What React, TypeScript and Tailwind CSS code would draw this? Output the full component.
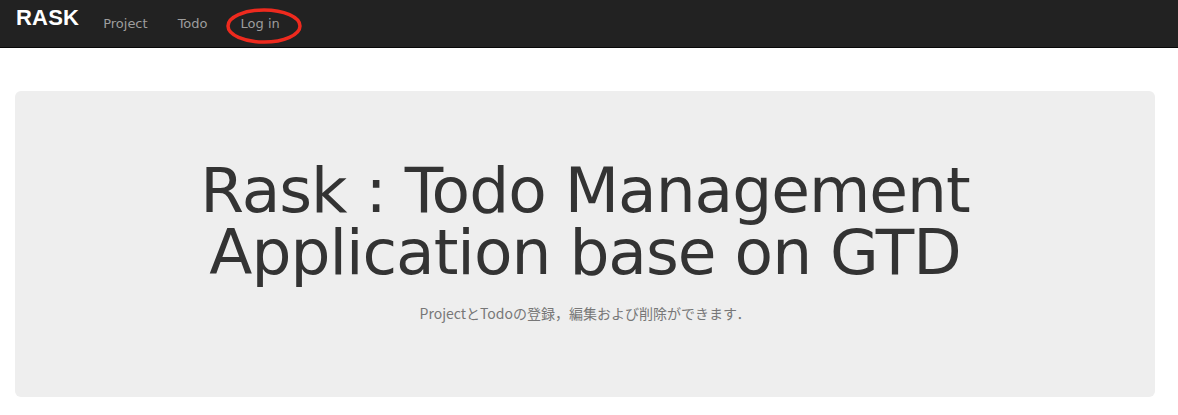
export default function App() {
  return (
    <div className="min-h-[415px] bg-white" style={{ fontFamily: '"DejaVu Sans", Verdana, sans-serif' }}>
      {/* navbar */}
      <nav className="h-12 bg-[#222] border-b border-[#080808] flex items-start px-[15px]">
        <a className="pt-[6px] pr-[9px] pl-px text-[22px] font-bold text-white tracking-[0.2px] leading-[24px]" style={{ fontFamily: '"Liberation Sans", Arial, sans-serif' }}>
          RASK
        </a>
        <ul className="flex pt-[15px] text-[13px] text-[#9d9d9d] leading-[18px]">
          <li className="px-[15px]">Project</li>
          <li className="pl-[15px] pr-[18px]">Todo</li>
          <li className="relative px-[15px]">
            Log in
            <svg className="absolute left-[-1px] top-[-8px] w-[78px] h-[38px] pointer-events-none" viewBox="0 0 78 38">
              <ellipse cx="39" cy="19" rx="36" ry="16" fill="none" stroke="#ee2a1e" strokeWidth="3.5" />
            </svg>
          </li>
        </ul>
      </nav>

      <div className="pl-[15px] pr-[23px] pt-[43px]">
        <div className="h-[306px] bg-[#eee] rounded-md flex flex-col items-center pt-[69px]">
          <h1 className="text-center text-[63px] leading-[62px] text-[#333] tracking-[-1px]" style={{ fontFamily: '"DejaVu Sans", Tahoma, sans-serif' }}>
            Rask : Todo Management
            <br />
            Application base on GTD
          </h1>
          <p className="mt-[19px] text-[14px] text-[#777]" style={{ fontFamily: '"Noto Sans CJK JP", sans-serif' }}>
            ProjectとTodoの登録，編集および削除ができます．
          </p>
        </div>
      </div>
    </div>
  );
}
